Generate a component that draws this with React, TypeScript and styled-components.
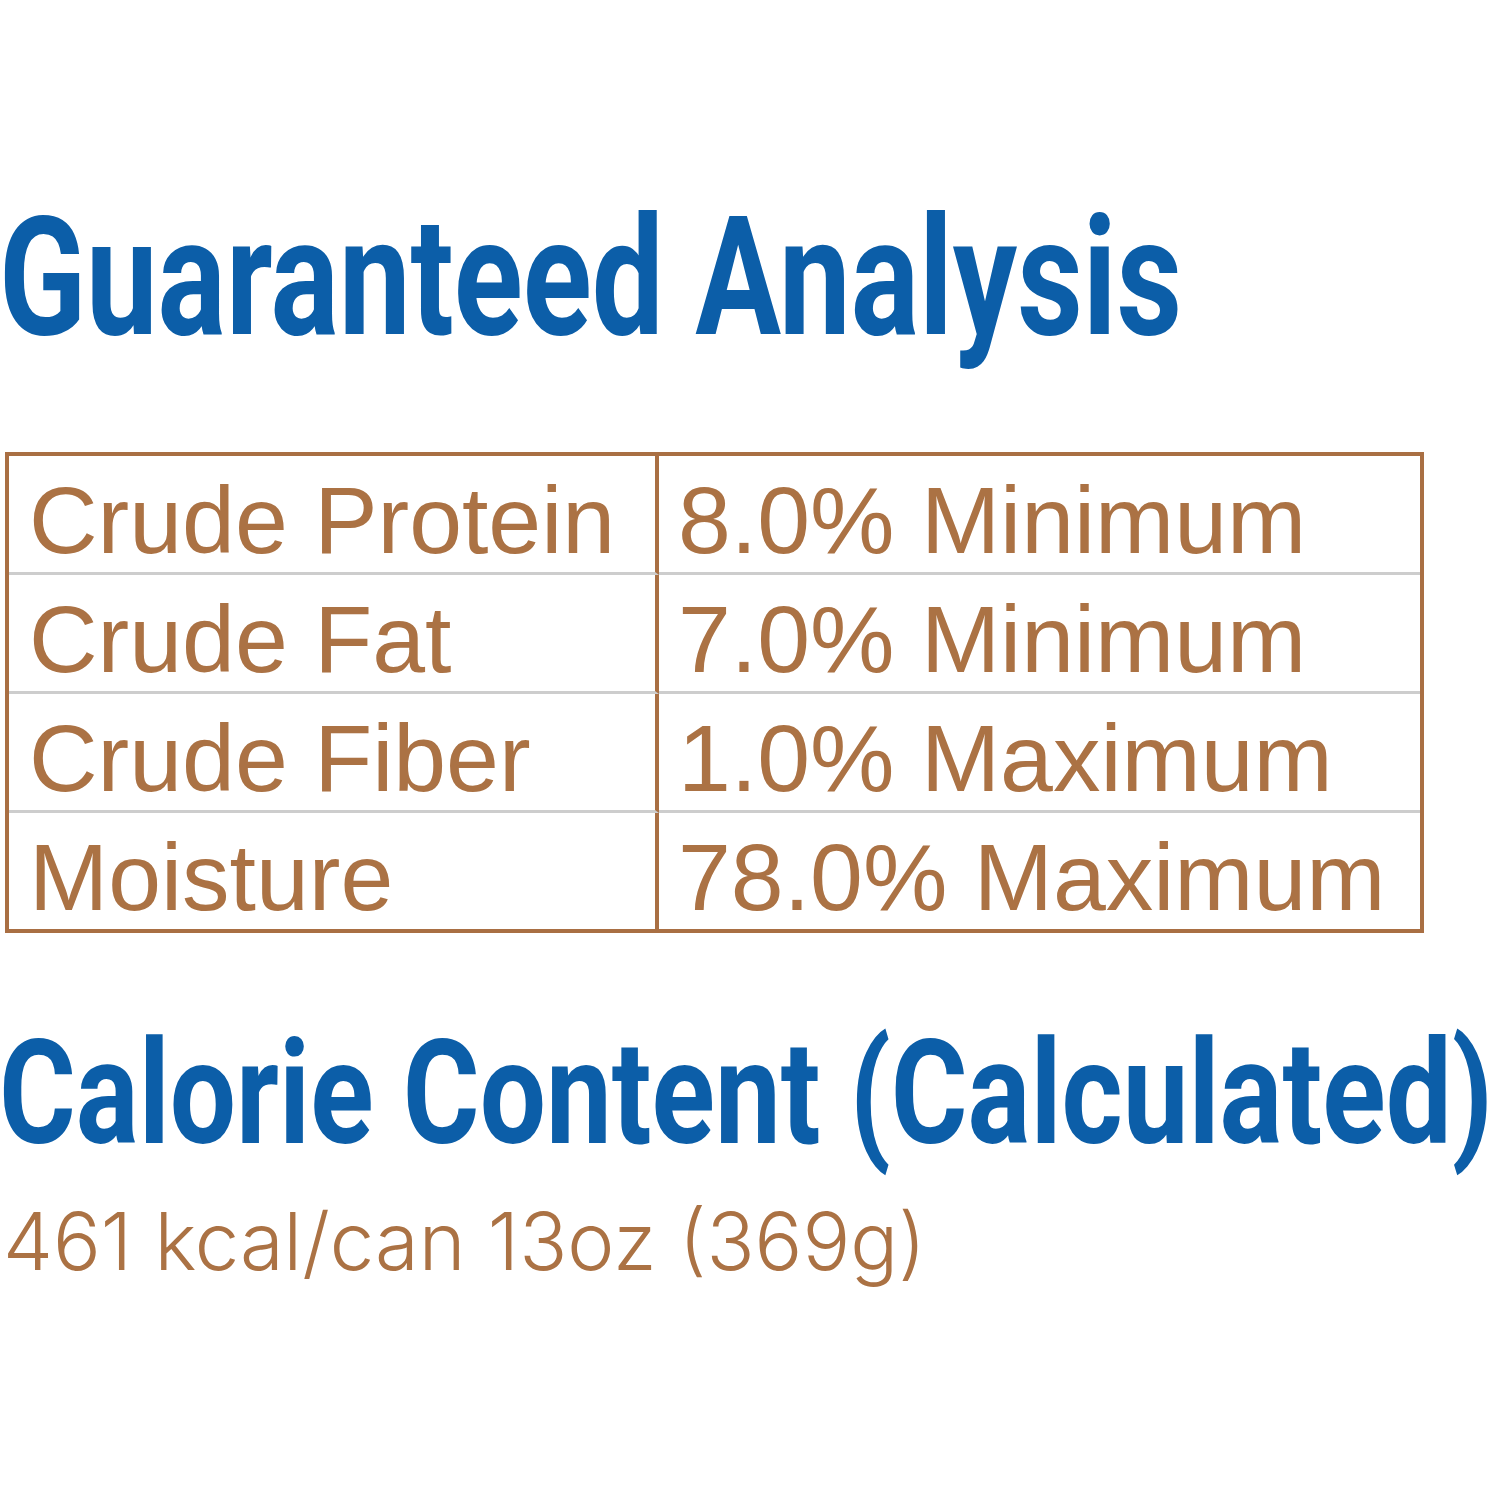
import React from "react";
import styled, { createGlobalStyle } from "styled-components";

const GlobalStyle = createGlobalStyle`
  html, body {
    margin: 0;
    padding: 0;
    background: #ffffff;
  }
`;

const BLUE = "#0c5ea8";
const BROWN = "#a96f43";
const TEXT_BROWN = "#ab7244";
const RULE = "#cdcdcd";

const Page = styled.div`
  width: 1500px;
  height: 1500px;
  display: flex;
  flex-direction: column;
  overflow: hidden;
`;

// condensed bold heading: no condensed face is installed, so Roboto Bold is narrowed
const Heading = styled.h1<{ $size: number; $top: number; $squeeze: number }>`
  margin: ${(p) => p.$top}px 0 0 -1px;
  font-family: Roboto, "Liberation Sans", sans-serif;
  font-weight: 700;
  font-size: ${(p) => p.$size}px;
  line-height: 1;
  color: ${BLUE};
  white-space: nowrap;
  transform: scaleX(${(p) => p.$squeeze});
  transform-origin: left center;
`;

const Table = styled.div`
  margin: 92px 0 0 5px;
  width: 1419px;
  box-sizing: border-box;
  border: 4px solid ${BROWN};
  display: grid;
  grid-template-columns: 650px 1fr;
`;

const Cell = styled.div<{ $left?: boolean; $last?: boolean }>`
  height: ${(p) => (p.$last ? 116 : 119)}px;
  box-sizing: border-box;
  padding: 10px 0 0 ${(p) => (p.$left ? 20 : 19)}px;
  border-right: ${(p) => (p.$left ? `4px solid ${BROWN}` : "none")};
  border-bottom: ${(p) => (p.$last ? "none" : `3px solid ${RULE}`)};
  font-family: "Liberation Sans", Arial, sans-serif;
  font-size: 95px;
  line-height: 108px;
  color: ${TEXT_BROWN};
  white-space: nowrap;
`;

const Calories = styled.p`
  margin: 36px 0 0 0;
  padding-left: 3px;
  font-family: Inter, "Noto Sans", sans-serif;
  font-weight: 300;
  font-size: 79.5px;
  line-height: 1;
  color: ${TEXT_BROWN};
  white-space: nowrap;
`;

const rows: [string, string][] = [
  ["Crude Protein", "8.0% Minimum"],
  ["Crude Fat", "7.0% Minimum"],
  ["Crude Fiber", "1.0% Maximum"],
  ["Moisture", "78.0% Maximum"],
];

export default function App() {
  return (
    <Page>
      <GlobalStyle />
      <Heading $size={165} $top={195} $squeeze={0.774}>
        Guaranteed Analysis
      </Heading>
      <Table>
        {rows.map(([name, value], i) => (
          <React.Fragment key={name}>
            <Cell $left $last={i === rows.length - 1}>
              {name}
            </Cell>
            <Cell $last={i === rows.length - 1}>{value}</Cell>
          </React.Fragment>
        ))}
      </Table>
      <Heading $size={145} $top={88} $squeeze={0.81}>
        Calorie Content (Calculated)
      </Heading>
      <Calories>461 kcal/can 13oz (369g)</Calories>
    </Page>
  );
}
